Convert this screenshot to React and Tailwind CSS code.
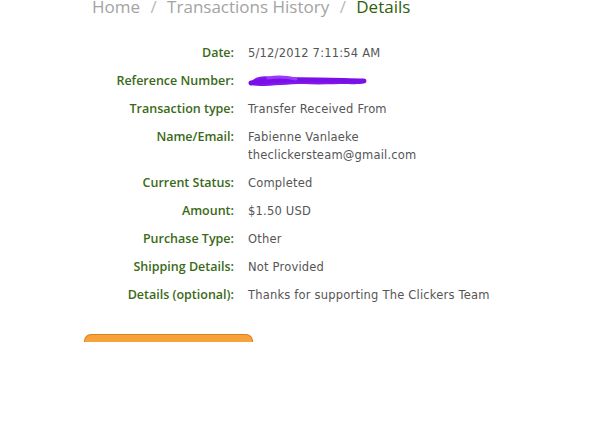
import React from 'react';

const rows = [
    { label: 'Date:', value: ['5/12/2012 7:11:54 AM'] },
    { label: 'Reference Number:', value: null },
    { label: 'Transaction type:', value: ['Transfer Received From'] },
    { label: 'Name/Email:', value: ['Fabienne Vanlaeke', 'theclickersteam@gmail.com'] },
    { label: 'Current Status:', value: ['Completed'] },
    { label: 'Amount:', value: ['$1.50 USD'] },
    { label: 'Purchase Type:', value: ['Other'] },
    { label: 'Shipping Details:', value: ['Not Provided'] },
    { label: 'Details (optional):', value: ['Thanks for supporting The Clickers Team'] },
];

const Scribble = () => (
    <svg width="120" height="16" viewBox="0 0 120 16" className="block">
        <path
            d="M2 10 C6 4, 14 2, 24 4 C34 6, 42 5, 52 6 C60 7, 66 6, 74 7 C84 8, 100 6, 117 7 C118 10, 114 12, 100 11 C86 11, 70 12, 56 11 C40 11, 24 13, 12 13 C6 13, 2 12, 2 10 Z"
            fill="#8418f0"
        />
        <path d="M3 10 C30 5, 70 7, 116 8" stroke="#7a10e8" strokeWidth="5" fill="none" strokeLinecap="round" />
        <path d="M20 5 C30 3, 40 4, 48 6" stroke="#9a3cf5" strokeWidth="3" fill="none" strokeLinecap="round" />
    </svg>
);

const App = () => {
    return (
        <div className="w-[604px] h-[432px] bg-white overflow-hidden relative">
            <div
                className="pl-[92px] -mt-[4px] text-[17px] leading-[22px] text-[#a3a3a3] whitespace-nowrap"
                style={{ fontFamily: '"Open Sans", sans-serif' }}
            >
                Home <span className="px-[6px] text-[#b8b8b8]">/</span> Transactions History{' '}
                <span className="px-[6px] text-[#b8b8b8]">/</span>{' '}
                <span className="text-[#2f5f0c]">Details</span>
            </div>

            <div className="mt-[26px] flex flex-col gap-[10px]" style={{ fontFamily: '"DejaVu Sans", sans-serif' }}>
                {rows.map((row) => (
                    <div key={row.label} className="flex items-start">
                        <div
                            className="w-[234px] shrink-0 text-right text-[12.5px] leading-[18px] font-semibold text-[#3a6a18]"
                            style={{ fontFamily: '"Open Sans", sans-serif' }}
                        >
                            {row.label}
                        </div>
                        <div className="pl-[14px] text-[11.5px] leading-[18px] text-[#555] tracking-[0.2px]">
                            {row.value ? (
                                row.value.map((line) => <div key={line}>{line}</div>)
                            ) : (
                                <div className="h-[18px] flex items-center"><Scribble /></div>
                            )}
                        </div>
                    </div>
                ))}
            </div>

            <div className="ml-[84px] mt-[30px] w-[169px] h-[8px] bg-[#f7a23a] border border-b-0 border-[#d9801f] rounded-t-[7px]" />
        </div>
    );
};

export default App;
